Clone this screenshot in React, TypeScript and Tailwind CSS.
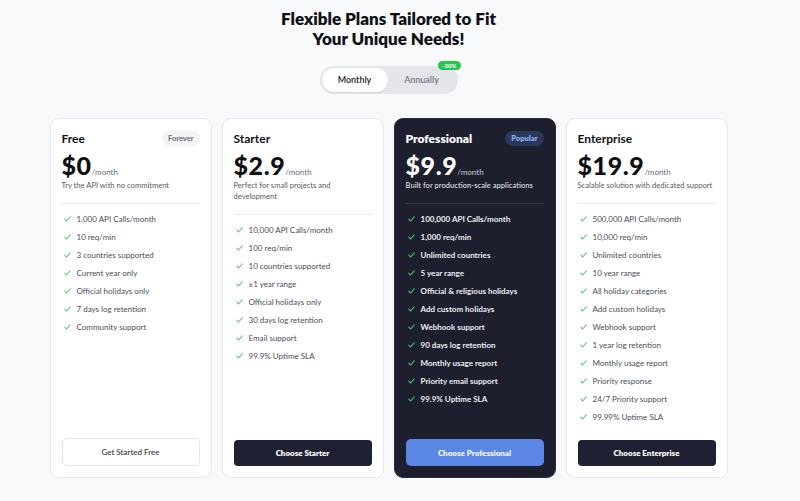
import React from "react";

type Plan = {
  name: string;
  price: string;
  desc: string;
  badge?: string;
  features: string[];
  cta: string;
  variant: "outline" | "dark" | "pro";
};

const plans: Plan[] = [
  {
    name: "Free",
    price: "$0",
    desc: "Try the API with no commitment",
    badge: "Forever",
    features: [
      "1,000 API Calls/month",
      "10 req/min",
      "3 countries supported",
      "Current year only",
      "Official holidays only",
      "7 days log retention",
      "Community support",
    ],
    cta: "Get Started Free",
    variant: "outline",
  },
  {
    name: "Starter",
    price: "$2.9",
    desc: "Perfect for small projects and development",
    features: [
      "10,000 API Calls/month",
      "100 req/min",
      "10 countries supported",
      "±1 year range",
      "Official holidays only",
      "30 days log retention",
      "Email support",
      "99.9% Uptime SLA",
    ],
    cta: "Choose Starter",
    variant: "dark",
  },
  {
    name: "Professional",
    price: "$9.9",
    desc: "Built for production-scale applications",
    badge: "Popular",
    features: [
      "100,000 API Calls/month",
      "1,000 req/min",
      "Unlimited countries",
      "5 year range",
      "Official & religious holidays",
      "Add custom holidays",
      "Webhook support",
      "90 days log retention",
      "Monthly usage report",
      "Priority email support",
      "99.9% Uptime SLA",
    ],
    cta: "Choose Professional",
    variant: "pro",
  },
  {
    name: "Enterprise",
    price: "$19.9",
    desc: "Scalable solution with dedicated support",
    features: [
      "500,000 API Calls/month",
      "10,000 req/min",
      "Unlimited countries",
      "10 year range",
      "All holiday categories",
      "Add custom holidays",
      "Webhook support",
      "1 year log retention",
      "Monthly usage report",
      "Priority response",
      "24/7 Priority support",
      "99.99% Uptime SLA",
    ],
    cta: "Choose Enterprise",
    variant: "dark",
  },
];

function Check({ pro }: { pro: boolean }) {
  return (
    <svg width="7" height="6" viewBox="0 0 7 6" className="shrink-0">
      <polyline
        points="0.8,3.2 2.6,5 6.2,0.9"
        fill="none"
        stroke={pro ? "#3fc46a" : "#62c985"}
        strokeWidth="1.1"
        strokeLinecap="round"
        strokeLinejoin="round"
      />
    </svg>
  );
}

function Card({ plan }: { plan: Plan }) {
  const pro = plan.variant === "pro";
  return (
    <div
      className={
        pro
          ? "flex h-[360px] w-[162px] flex-col rounded-[9px] border border-[#2c2d3c] bg-[#1e1f2e] px-[11px] pb-[11px] pt-[12px]"
          : "flex h-[360px] w-[162px] flex-col rounded-[9px] border border-[#e8e9ee] bg-white px-[11px] pb-[11px] pt-[12px]"
      }
    >
      <div className="flex h-[15px] items-center justify-between">
        <span
          className={
            pro
              ? "text-[12px] font-extrabold leading-none text-white"
              : "text-[12px] font-bold leading-none text-[#111216]"
          }
        >
          {plan.name}
        </span>
        {plan.badge &&
          (pro ? (
            <span className="rounded-full bg-[#2b3858] px-[6px] py-[3.5px] text-[7.5px] font-extrabold leading-none text-[#86aef5]">
              {plan.badge}
            </span>
          ) : (
            <span className="rounded-full bg-[#f3f4f6] px-[6px] py-[3.5px] text-[7.5px] font-bold leading-none text-[#6b6e78]">
              {plan.badge}
            </span>
          ))}
      </div>
      <div className="mt-[6px] flex items-baseline">
        <span
          className={
            pro
              ? "text-[25px] font-black leading-[27px] tracking-[0.6px] text-white"
              : "text-[25px] font-black leading-[27px] tracking-[0.6px] text-[#0e0f13]"
          }
        >
          {plan.price}
        </span>
        <span className={pro ? "text-[8px] text-[#c9cad3]" : "text-[8px] text-[#6b6e78]"}>
          /month
        </span>
      </div>
      <p
        className={
          pro
            ? "mt-[1px] text-[7.6px] font-semibold leading-[11px] text-[#d6d7de]"
            : "mt-[1px] text-[7.6px] leading-[11px] text-[#585b66]"
        }
      >
        {plan.desc}
      </p>
      <div className={pro ? "mt-[12px] h-px bg-[#393a4b]" : "mt-[12px] h-px bg-[#ebecf0]"} />
      <ul className="mt-[9px] flex flex-col gap-[7px]">
        {plan.features.map((f) => (
          <li key={f} className="flex h-[11px] items-center gap-[6px] pl-[2px]">
            <Check pro={pro} />
            <span
              className={
                pro
                  ? "text-[8px] font-bold leading-none text-[#eceef3]"
                  : "text-[8px] leading-none text-[#4b4e58]"
              }
            >
              {f}
            </span>
          </li>
        ))}
      </ul>
      <div className="mt-auto">
        {plan.variant === "outline" && (
          <button className="flex h-[28px] w-full items-center justify-center rounded-[5px] border border-[#e3e4ea] bg-white text-[8px] font-semibold text-[#3c3f48]">
            {plan.cta}
          </button>
        )}
        {plan.variant === "dark" && (
          <button className="flex h-[26px] w-full items-center justify-center rounded-[4px] bg-[#1f2031] text-[8px] font-extrabold text-white">
            {plan.cta}
          </button>
        )}
        {plan.variant === "pro" && (
          <button className="flex h-[27px] w-full items-center justify-center rounded-[5px] bg-[#5a86e6] text-[8px] font-extrabold text-[#f3f6fd]">
            {plan.cta}
          </button>
        )}
      </div>
    </div>
  );
}

export default function App() {
  return (
    <div
      className="min-h-[501px] w-full bg-[#f8f9fb]"
      style={{ fontFamily: "Lato, 'Noto Sans', sans-serif" }}
    >
      <div className="flex w-[777px] flex-col items-center pt-[9px]">
        <h1 className="text-center text-[17px] font-extrabold leading-[20px] text-[#101116]">
          Flexible Plans Tailored to Fit
          <br />
          Your Unique Needs!
        </h1>
        <div className="relative mt-[17px] flex h-[28px] w-[138px] items-center rounded-full bg-[#e5e6eb] p-[2px]">
          <div className="flex h-full w-[66px] items-center justify-center rounded-full bg-white text-[9px] font-semibold text-[#1b1c22] shadow-[0_1px_2px_rgba(0,0,0,0.08)]">
            Monthly
          </div>
          <div className="flex h-full flex-1 items-center justify-center text-[9px] font-medium text-[#6b6e78]">
            Annually
          </div>
          <span className="absolute right-[-3px] top-[-5px] rounded-full bg-[#27c44f] px-[4px] py-[1.5px] text-[6px] font-black leading-none text-white">
            -20%
          </span>
        </div>
        <div className="mt-[24px] flex gap-[10px]">
          {plans.map((p) => (
            <Card key={p.name} plan={p} />
          ))}
        </div>
      </div>
    </div>
  );
}
